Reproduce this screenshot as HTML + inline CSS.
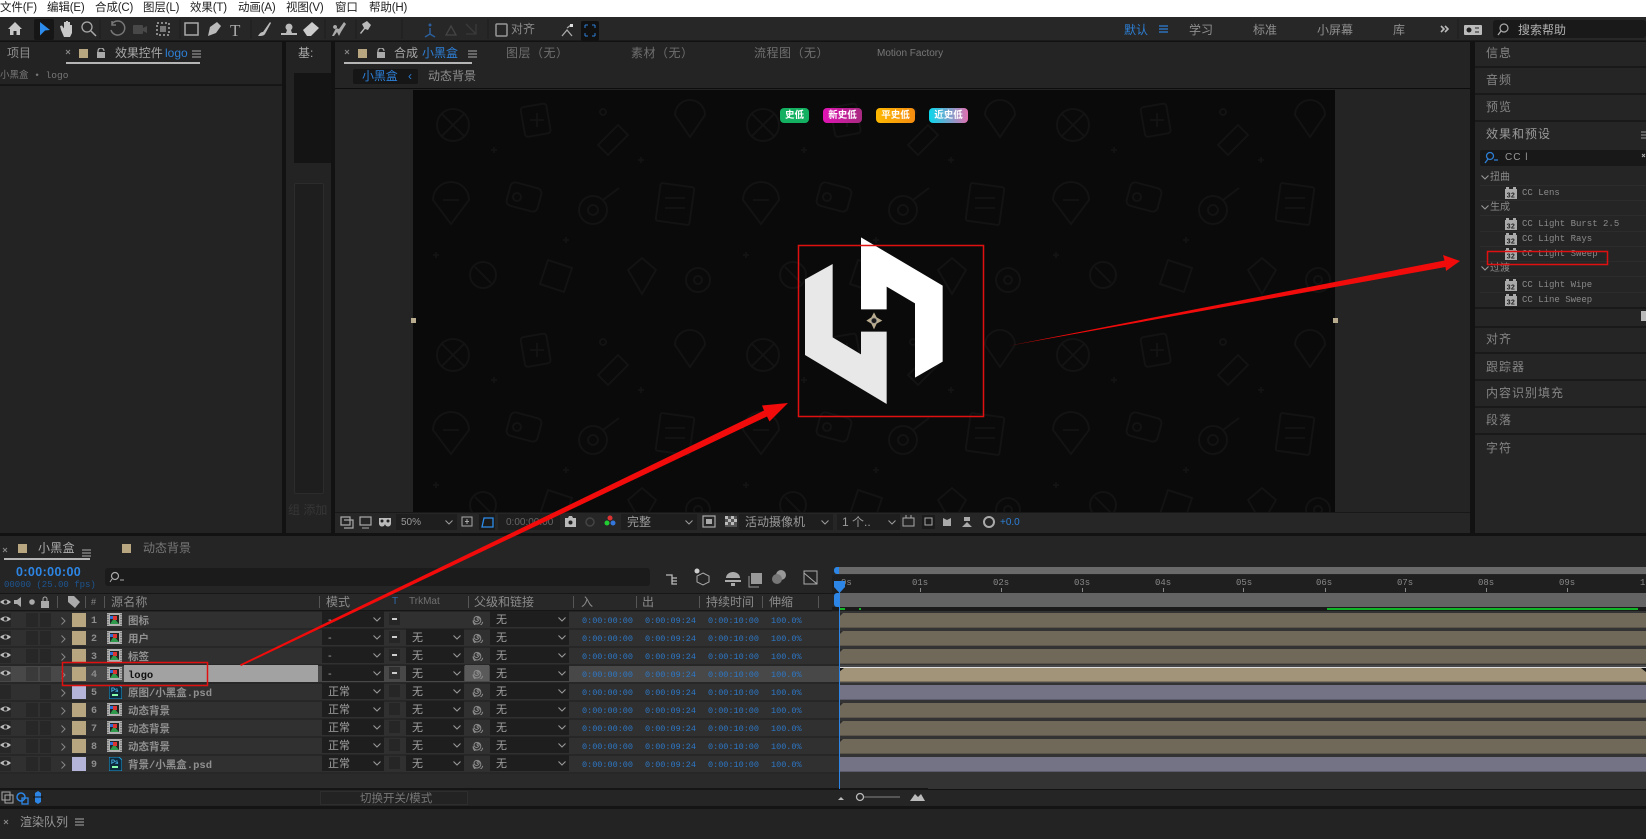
<!DOCTYPE html>
<html lang="zh"><head><meta charset="utf-8"><title>After Effects</title>
<style>
html,body{margin:0;padding:0;background:#111;}
#p{position:relative;width:1646px;height:839px;overflow:hidden;background:#121212;font-family:"Liberation Sans","Noto Sans CJK SC",sans-serif;color:#8f8f8f;font-size:12px;}
#p div,#p span{position:absolute;display:block;box-sizing:border-box;}
.t{white-space:nowrap;line-height:14px;height:14px;}
.mn{color:#222;font-size:11.5px;letter-spacing:-.15px;top:1px;}
.b{color:#2d7fd6;}
.m{font-family:"Liberation Mono","Noto Sans CJK SC",monospace;}
.hl{height:2px;background:#191919;left:1475px;width:171px;}
.r{left:0;width:839px;height:18px;background:#303030;border-bottom:2px solid #272727;}
.r .box{top:1px;height:14px;background:#272727;}
.x1{left:0;width:11px;}.x2{left:26px;width:12px;}.x3{left:40px;width:11px;}
.sw{left:72px;top:1px;width:14px;height:14px;background:#b8a680;}
.lv{background:#b4b4d8;}
.n{left:91px;top:3px;width:8px;font:bold 10px/14px "Liberation Mono",monospace;color:#8d8d8d;}
.na{left:128px;top:3px;font:bold 10.5px/14px "Liberation Mono","Noto Sans CJK SC",monospace;color:#909090;white-space:nowrap;}
.sel{top:-1px;height:16px;background:#1e1e1e;color:#a0a0a0;font-size:11px;line-height:19px;overflow:hidden;}
.s1{left:322px;width:62px;padding-left:6px;}
.tb{left:389px;top:1px;width:11px;height:12px;background:#262626;}
.dash{left:392px;top:6px;width:5px;height:2px;background:#ccc;}
.s2{left:406px;width:58px;padding-left:6px;}
.s3{left:490px;width:79px;padding-left:6px;}
.tc{top:2px;font:8.5px/14px "Liberation Mono",monospace;color:#2d78c8;white-space:nowrap;}
.c1{left:582px;}.c2{left:645px;}.c3{left:708px;}.c4{left:771px;}
.bar{left:839px;width:807px;height:15px;background:#70695a;border-bottom:1px solid #5a5548;}
.bl{background:#737385;border-bottom-color:#5b5b6b;}
.rt{top:578px;font:9px/10px "Liberation Mono",monospace;color:#888;white-space:nowrap;}
.tk{top:588px;width:1px;height:4px;background:#888;}
.h{top:595px;font-size:12px;line-height:14px;color:#8a8a8a;white-space:nowrap;}
.sep{top:596px;width:1px;height:12px;background:#555;}
.pi{font:9px/12px "Liberation Mono","Noto Sans CJK SC",monospace;color:#8a8a8a;white-space:nowrap;left:1522px;}
.cat{font-size:10px;line-height:12px;color:#8a8a8a;left:1490px;white-space:nowrap;}
.rp{left:1486px;letter-spacing:1px;color:#858585;}
.line{left:1480px;width:166px;height:1px;background:#2c2c2c;}
.bd{top:108px;height:15px;border-radius:4px;color:#fff;font:bold 9.5px/15px "Liberation Sans","Noto Sans CJK SC",sans-serif;text-align:center;}
</style></head><body><div id="p">

<!-- menu -->
<div style="left:0;top:0;width:1646px;height:17px;background:#fff;"></div>
<span class="t mn" style="left:0;">文件(F)</span>
<span class="t mn" style="left:47px;">编辑(E)</span>
<span class="t mn" style="left:95px;">合成(C)</span>
<span class="t mn" style="left:143px;">图层(L)</span>
<span class="t mn" style="left:190px;">效果(T)</span>
<span class="t mn" style="left:238px;">动画(A)</span>
<span class="t mn" style="left:286px;">视图(V)</span>
<span class="t mn" style="left:335px;">窗口</span>
<span class="t mn" style="left:369px;">帮助(H)</span>

<!-- toolbar -->
<div style="left:0;top:17px;width:1646px;height:24px;background:#272727;border-bottom:1px solid #1a1a1a;"></div>
<span class="t" style="left:511px;top:22px;color:#8a8a8a;">对齐</span>
<span class="t b" style="left:1124px;top:23px;">默认</span>
<span class="t" style="left:1189px;top:23px;">学习</span>
<span class="t" style="left:1253px;top:23px;">标准</span>
<span class="t" style="left:1317px;top:23px;">小屏幕</span>
<span class="t" style="left:1393px;top:23px;">库</span>
<div style="left:1493px;top:20px;width:153px;height:18px;background:#191919;border-radius:3px;"></div>
<span class="t" style="left:1518px;top:23px;color:#b0b0b0;">搜索帮助</span>

<!-- left panel -->
<div style="left:0;top:42px;width:282px;height:491px;background:#232323;"></div>
<span class="t" style="left:7px;top:46px;">项目</span>
<span class="t" style="left:115px;top:46px;color:#a8a8a8;letter-spacing:-.1px;">效果控件</span>
<span class="t b" style="left:165px;top:46px;">logo</span>
<div style="left:66px;top:62px;width:134px;height:2px;background:#b5b5b5;"></div>
<span class="t m" style="left:0;top:69px;font-size:9.5px;color:#777;">小黑盒 • logo</span>
<div style="left:0;top:84px;width:282px;height:2px;background:#161616;"></div>

<!-- middle panel -->
<div style="left:286px;top:42px;width:45px;height:491px;background:#232323;"></div>
<span class="t" style="left:298px;top:46px;color:#aaa;">基:</span>
<div style="left:294px;top:73px;width:37px;height:90px;background:#141414;"></div>
<div style="left:294px;top:183px;width:30px;height:311px;background:#1e1e1e;border:1px solid #2c2c2c;border-radius:2px;"></div>
<span class="t" style="left:288px;top:503px;color:#363636;">组 添加</span>

<!-- comp panel -->
<div style="left:335px;top:42px;width:1135px;height:491px;background:#242424;"></div>
<span class="t" style="left:394px;top:46px;color:#a8a8a8;">合成</span>
<span class="t b" style="left:422px;top:46px;">小黑盒</span>
<div style="left:344px;top:62px;width:128px;height:2px;background:#b5b5b5;"></div>
<span class="t" style="left:506px;top:46px;letter-spacing:.5px;color:#6f6f6f;">图层（无）</span>
<span class="t" style="left:631px;top:46px;letter-spacing:.5px;color:#6f6f6f;">素材（无）</span>
<span class="t" style="left:754px;top:46px;letter-spacing:.5px;color:#6f6f6f;">流程图（无）</span>
<span class="t" style="left:877px;top:47px;font-size:10px;color:#777;">Motion Factory</span>
<div style="left:353px;top:69px;width:65px;height:15px;background:#161616;border-radius:2px;"></div>
<span class="t b" style="left:362px;top:69px;letter-spacing:-.1px;">小黑盒</span>
<span class="t b" style="left:408px;top:69px;">‹</span>
<span class="t" style="left:428px;top:69px;">动态背景</span>
<div style="left:335px;top:88px;width:1135px;height:1px;background:#0d0d0d;"></div>

<!-- comp footer -->
<div style="left:335px;top:512px;width:1135px;height:21px;background:#262626;border-top:1px solid #181818;"></div>
<div style="left:396px;top:514px;width:61px;height:16px;background:#1e1e1e;"></div>
<span class="t" style="left:401px;top:516px;font-size:10px;color:#999;">50%</span>
<div style="left:479px;top:514px;width:16px;height:16px;background:#1a1a1a;"></div>
<div style="left:498px;top:514px;width:62px;height:16px;background:#1e1e1e;"></div>
<span class="t" style="left:506px;top:516px;font-size:10px;color:#666;">0:00:00:00</span>
<div style="left:621px;top:514px;width:76px;height:16px;background:#1e1e1e;"></div>
<span class="t" style="left:627px;top:515px;color:#9a9a9a;">完整</span>
<div style="left:739px;top:514px;width:94px;height:16px;background:#1e1e1e;"></div>
<span class="t" style="left:745px;top:515px;color:#9a9a9a;">活动摄像机</span>
<div style="left:837px;top:514px;width:63px;height:16px;background:#1e1e1e;"></div>
<span class="t" style="left:842px;top:515px;color:#9a9a9a;">1 个..</span>
<span class="t b" style="left:1000px;top:516px;font-size:10px;">+0.0</span>

<!-- right panel -->
<div style="left:1475px;top:42px;width:171px;height:491px;background:#252525;"></div>
<span class="t rp" style="top:46px;">信息</span><div class="hl" style="top:66px;"></div>
<span class="t rp" style="top:73px;">音频</span><div class="hl" style="top:93px;"></div>
<span class="t rp" style="top:100px;">预览</span><div class="hl" style="top:120px;"></div>
<span class="t rp" style="top:127px;left:1486px;color:#9a9a9a;">效果和预设</span>
<div style="left:1480px;top:150px;width:166px;height:16px;background:#181818;border-radius:2px;"></div>
<span class="t" style="left:1505px;top:151px;font-size:10px;letter-spacing:1px;color:#999;">CC l</span>
<span class="cat" style="top:172px;">扭曲</span><div class="line" style="top:185px;"></div>
<span class="pi" style="top:187px;">CC Lens</span><div class="line" style="top:200px;"></div>
<span class="cat" style="top:202px;">生成</span><div class="line" style="top:215px;"></div>
<span class="pi" style="top:218px;">CC Light Burst 2.5</span><div class="line" style="top:231px;"></div>
<span class="pi" style="top:233px;">CC Light Rays</span><div class="line" style="top:246px;"></div>
<span class="pi" style="top:248px;">CC Light Sweep</span><div class="line" style="top:261px;"></div>
<span class="cat" style="top:263px;">过渡</span><div class="line" style="top:276px;"></div>
<span class="pi" style="top:279px;">CC Light Wipe</span><div class="line" style="top:292px;"></div>
<span class="pi" style="top:294px;">CC Line Sweep</span>
<div class="hl" style="top:307px;"></div>
<div class="hl" style="top:326px;"></div>
<span class="t rp" style="top:332px;">对齐</span><div class="hl" style="top:352px;"></div>
<span class="t rp" style="top:360px;">跟踪器</span><div class="hl" style="top:379px;"></div>
<span class="t rp" style="top:386px;">内容识别填充</span><div class="hl" style="top:406px;"></div>
<span class="t rp" style="top:413px;">段落</span><div class="hl" style="top:433px;"></div>
<span class="t rp" style="top:441px;">字符</span>

<div style="left:413px;top:90px;width:922px;height:422px;background:#0a0a0a;"></div>

<!-- timeline -->
<div style="left:0;top:536px;width:1646px;height:253px;background:#252525;"></div>
<span class="t" style="left:38px;top:541px;color:#aaa;letter-spacing:.3px;">小黑盒</span>
<span class="t" style="left:143px;top:541px;color:#777;">动态背景</span>
<div style="left:4px;top:558px;width:86px;height:2px;background:#b5b5b5;"></div>
<span class="t" style="left:16px;top:565px;font:bold 12.5px/14px 'Liberation Sans',sans-serif;color:#2d86e6;letter-spacing:.4px;">0:00:00:00</span>
<span class="t m" style="left:4px;top:578px;font-size:9px;color:#1e5590;">00000 (25.00 fps)</span>
<div style="left:105px;top:568px;width:545px;height:18px;background:#1b1b1b;border-radius:3px;"></div>
<div style="left:0;top:593px;width:839px;height:18px;background:#282828;border-top:1px solid #161616;border-bottom:1px solid #161616;"></div>
<span class="h" style="left:111px;letter-spacing:.2px;">源名称</span>
<span class="h" style="left:326px;">模式</span>
<span class="h" style="left:392px;font-size:10px;color:#2f6aa8;">T</span>
<span class="h" style="left:409px;font-size:10px;color:#707070;">TrkMat</span>
<span class="h" style="left:474px;">父级和链接</span>
<span class="h" style="left:581px;">入</span>
<span class="h" style="left:642px;">出</span>
<span class="h" style="left:706px;">持续时间</span>
<span class="h" style="left:769px;">伸缩</span>
<span class="h" style="left:91px;font-size:9px;">#</span>
<div class="sep" style="left:57px;"></div><div class="sep" style="left:85px;"></div><div class="sep" style="left:104px;"></div><div class="sep" style="left:319px;"></div><div class="sep" style="left:468px;"></div><div class="sep" style="left:573px;"></div><div class="sep" style="left:636px;"></div><div class="sep" style="left:699px;"></div><div class="sep" style="left:762px;"></div><div class="sep" style="left:818px;"></div>

<!-- timeline right -->
<div style="left:839px;top:567px;width:807px;height:7px;background:#6a6a6a;"></div>
<div style="left:834px;top:567px;width:5px;height:7px;background:#2d86e6;border-radius:3px 0 0 3px;"></div>
<div style="left:832px;top:575px;width:814px;height:18px;background:#1f1f1f;"></div>
<span class="rt" style="left:841px;">0s</span>
<span class="rt" style="left:912px;">01s</span><span class="rt" style="left:993px;">02s</span><span class="rt" style="left:1074px;">03s</span><span class="rt" style="left:1155px;">04s</span><span class="rt" style="left:1236px;">05s</span><span class="rt" style="left:1316px;">06s</span><span class="rt" style="left:1397px;">07s</span><span class="rt" style="left:1478px;">08s</span><span class="rt" style="left:1559px;">09s</span><span class="rt" style="left:1640px;">10</span>
<div class="tk" style="left:920px;"></div><div class="tk" style="left:1001px;"></div><div class="tk" style="left:1082px;"></div><div class="tk" style="left:1163px;"></div><div class="tk" style="left:1243px;"></div><div class="tk" style="left:1325px;"></div><div class="tk" style="left:1405px;"></div><div class="tk" style="left:1486px;"></div><div class="tk" style="left:1567px;"></div>
<div style="left:839px;top:593px;width:807px;height:14px;background:#636363;"></div>
<div style="left:834px;top:593px;width:5px;height:14px;background:#2d86e6;border-radius:3px 0 0 3px;"></div>
<div style="left:832px;top:607px;width:814px;height:4px;background:#1a1a1a;"></div>
<div style="left:839px;top:608px;width:6px;height:2px;background:#12b528;"></div>
<div style="left:859px;top:608px;width:2px;height:2px;background:#12b528;"></div>
<div style="left:1327px;top:608px;width:311px;height:2px;background:#12b528;"></div>
<div style="left:832px;top:611px;width:814px;height:178px;background:#333;"></div>
<div style="left:832px;top:611px;width:7px;height:178px;background:#2a2a2a;"></div>
<div style="left:570px;top:665px;width:1076px;height:18px;background:#484848;"></div>

<div class="bar" style="top:613px;"></div>
<div class="bar" style="top:631px;"></div>
<div class="bar" style="top:649px;"></div>
<div class="bar" style="top:667px;height:15px;background:#a29479;border-top:1px solid #ddd;border-bottom:1px solid #7a705c;"></div>
<div class="bar bl" style="top:685px;"></div>
<div class="bar" style="top:703px;"></div>
<div class="bar" style="top:721px;"></div>
<div class="bar" style="top:739px;"></div>
<div class="bar bl" style="top:757px;"></div>

<!-- rows -->
<div class="r" style="top:612px;"><div class="box x1"></div><div class="box x2"></div><div class="box x3"></div><div class="sw"></div><span class="n">1</span><span class="na">图标</span><div class="sel s1">-</div><div class="tb"></div><div class="dash"></div><div class="sel s3">无</div><span class="tc c1">0:00:00:00</span><span class="tc c2">0:00:09:24</span><span class="tc c3">0:00:10:00</span><span class="tc c4">100.0%</span></div>
<div class="r" style="top:630px;"><div class="box x1"></div><div class="box x2"></div><div class="box x3"></div><div class="sw"></div><span class="n">2</span><span class="na">用户</span><div class="sel s1">-</div><div class="tb"></div><div class="dash"></div><div class="sel s2">无</div><div class="sel s3">无</div><span class="tc c1">0:00:00:00</span><span class="tc c2">0:00:09:24</span><span class="tc c3">0:00:10:00</span><span class="tc c4">100.0%</span></div>
<div class="r" style="top:648px;"><div class="box x1"></div><div class="box x2"></div><div class="box x3"></div><div class="sw"></div><span class="n">3</span><span class="na">标签</span><div class="sel s1">-</div><div class="tb"></div><div class="dash"></div><div class="sel s2">无</div><div class="sel s3">无</div><span class="tc c1">0:00:00:00</span><span class="tc c2">0:00:09:24</span><span class="tc c3">0:00:10:00</span><span class="tc c4">100.0%</span></div>
<div class="r" style="top:666px;background:#484848;"><div class="box x1" style="background:#3a3a3a;"></div><div class="box x2" style="background:#3a3a3a;"></div><div class="box x3" style="background:#3a3a3a;"></div><div class="sw"></div><span class="n">4</span><div style="left:124px;top:-1px;width:194px;height:17px;background:#a2a2a2;"></div><span class="na" style="color:#111;">logo</span><div class="sel s1">-</div><div class="tb" style="background:#303030;"></div><div class="dash"></div><div class="sel s2">无</div><div style="left:465px;top:-1px;width:24px;height:16px;background:#5a5a5a;"></div><div class="sel s3">无</div><span class="tc c1">0:00:00:00</span><span class="tc c2">0:00:09:24</span><span class="tc c3">0:00:10:00</span><span class="tc c4">100.0%</span></div>
<div class="r" style="top:684px;"><div class="box x1"></div><div class="box x3"></div><div class="sw lv"></div><span class="n">5</span><span class="na">原图/小黑盒.psd</span><div class="sel s1">正常</div><div class="tb"></div><div class="sel s2">无</div><div class="sel s3">无</div><span class="tc c1">0:00:00:00</span><span class="tc c2">0:00:09:24</span><span class="tc c3">0:00:10:00</span><span class="tc c4">100.0%</span></div>
<div class="r" style="top:702px;"><div class="box x1"></div><div class="box x2"></div><div class="box x3"></div><div class="sw"></div><span class="n">6</span><span class="na">动态背景</span><div class="sel s1">正常</div><div class="tb"></div><div class="sel s2">无</div><div class="sel s3">无</div><span class="tc c1">0:00:00:00</span><span class="tc c2">0:00:09:24</span><span class="tc c3">0:00:10:00</span><span class="tc c4">100.0%</span></div>
<div class="r" style="top:720px;"><div class="box x1"></div><div class="box x2"></div><div class="box x3"></div><div class="sw"></div><span class="n">7</span><span class="na">动态背景</span><div class="sel s1">正常</div><div class="tb"></div><div class="sel s2">无</div><div class="sel s3">无</div><span class="tc c1">0:00:00:00</span><span class="tc c2">0:00:09:24</span><span class="tc c3">0:00:10:00</span><span class="tc c4">100.0%</span></div>
<div class="r" style="top:738px;"><div class="box x1"></div><div class="box x2"></div><div class="box x3"></div><div class="sw"></div><span class="n">8</span><span class="na">动态背景</span><div class="sel s1">正常</div><div class="tb"></div><div class="sel s2">无</div><div class="sel s3">无</div><span class="tc c1">0:00:00:00</span><span class="tc c2">0:00:09:24</span><span class="tc c3">0:00:10:00</span><span class="tc c4">100.0%</span></div>
<div class="r" style="top:756px;"><div class="box x1"></div><div class="box x2"></div><div class="box x3"></div><div class="sw lv"></div><span class="n">9</span><span class="na">背景/小黑盒.psd</span><div class="sel s1">正常</div><div class="tb"></div><div class="sel s2">无</div><div class="sel s3">无</div><span class="tc c1">0:00:00:00</span><span class="tc c2">0:00:09:24</span><span class="tc c3">0:00:10:00</span><span class="tc c4">100.0%</span></div>
<div style="left:0;top:774px;width:832px;height:15px;background:#2a2a2a;"></div>

<!-- timeline footer -->
<div style="left:0;top:788px;width:928px;height:2px;background:#151515;"></div>
<div style="left:0;top:790px;width:1646px;height:16px;background:#252525;"></div>
<div style="left:320px;top:791px;width:148px;height:14px;background:#232323;border:1px solid #2e2e2e;"></div>
<span class="t" style="left:360px;top:792px;font-size:11.5px;color:#777;">切换开关/模式</span>
<div style="left:0;top:806px;width:1646px;height:3px;background:#141414;"></div>
<div style="left:0;top:809px;width:1646px;height:30px;background:#232323;"></div>
<span class="t" style="left:20px;top:815px;color:#999;">渲染队列</span>

<svg width="1646" height="839" viewBox="0 0 1646 839" style="position:absolute;left:0;top:0;" xmlns="http://www.w3.org/2000/svg">
<defs>
<pattern id="dood" width="310" height="230" patternUnits="userSpaceOnUse" x="413" y="90">
<g fill="none" stroke="#131313" stroke-width="1.800">
<circle cx="40" cy="35" r="16"/><path d="M29 24l22 22M51 24L29 46"/>
<rect x="110" y="15" width="26" height="30" rx="3" transform="rotate(-10 124 32)"/><path d="M117 30h14M124 23v14"/>
<path d="M185 55l20-20 10 10-20 20z"/><circle cx="190" cy="22" r="3"/>
<path d="M262 25a15 15 0 0 1 30 0l-15 22z"/>
<path d="M20 110a18 18 0 0 1 36 0l-18 24z"/><path d="M30 110h16"/>
<rect x="95" y="95" width="32" height="24" rx="5" transform="rotate(15 111 107)"/><circle cx="104" cy="107" r="4"/>
<circle cx="180" cy="120" r="14"/><path d="M190 110l16-12"/><circle cx="180" cy="120" r="5"/>
<rect x="245" y="95" width="34" height="38" rx="2" transform="rotate(8 262 114)"/><path d="M252 108h20M252 118h20"/>
<circle cx="70" cy="185" r="13"/><path d="M62 177l16 16"/>
<path d="M135 170l24 8-8 24-24-8z"/>
<path d="M215 180l14-12 14 12-14 24z"/>
<circle cx="285" cy="190" r="12"/><circle cx="285" cy="190" r="4"/>
<path d="M78 60h6M81 57v6M150 150h6M153 147v6M225 70h6M228 67v6M20 165h6M23 162v6"/>
</g></pattern>
<symbol id="eye" viewBox="0 0 11 8" width="11" height="8"><path d="M0 4Q5.500-1 11 4 5.500 9 0 4Z" fill="#bbb"/><circle cx="5.500" cy="4" r="1.800" fill="#222"/></symbol>
<symbol id="film" viewBox="0 0 15 13" width="15" height="13"><rect width="15" height="13" fill="#b0b0b0"/><rect x="3" y="2" width="9" height="9" fill="#222"/><path d="M3 11l4-6 5 6z" fill="#2f9a4c"/><rect x="6" y="3" width="4" height="4" fill="#d33"/><rect x="3" y="3" width="3" height="3" fill="#2d6ed6"/><path d="M1 1v11M14 1v11" stroke="#444" stroke-dasharray="1 1.500"/></symbol>
<symbol id="psd" viewBox="0 0 13 14" width="13" height="14"><path d="M0 0h10l3 3v11H0z" fill="#0d2a3c" stroke="#1a9ed8"/><text x="2" y="7" font-size="6" font-weight="bold" font-family="Liberation Sans" fill="#49b6ea">Ps</text><rect x="3" y="9" width="6" height="2" fill="#8fa"/></symbol>
<symbol id="sp" viewBox="0 0 12 12" width="12" height="12"><path d="M6 6.500a1 1 0 1 1 1-1 2.500 2.500 0 1 1-2.800-2 3.800 3.800 0 1 1-3 3.800 4.800 4.800 0 0 0 9.500 1.500" fill="none" stroke="#8c8c8c" stroke-width="1"/></symbol>
<symbol id="cd" viewBox="0 0 8 5" width="8" height="5"><path d="M.5.500L4 4 7.500.500" fill="none" stroke="#999" stroke-width="1.100"/></symbol>
<symbol id="cr" viewBox="0 0 5 8" width="5" height="8"><path d="M.5.500L4 4 .5 7.500" fill="none" stroke="#888" stroke-width="1"/></symbol>
<symbol id="fx" viewBox="0 0 12 12" width="12" height="12"><path d="M0 2h1V0h3v2h4V0h3v2h1v10H0z" fill="#aaa"/><text x="1.500" y="10.500" font-size="7" font-weight="bold" font-family="Liberation Mono" fill="#222">32</text></symbol>
<symbol id="ham" viewBox="0 0 9 8" width="9" height="8"><path d="M0 1h9M0 4h9M0 7h9" stroke="#aaa" stroke-width="1"/></symbol>
<symbol id="lock" viewBox="0 0 8 10" width="8" height="10"><path d="M1 4V3a3 3 0 0 1 6 0" fill="none" stroke="#aaa" stroke-width="1.300"/><rect y="4" width="8" height="6" fill="#aaa"/></symbol>
</defs>

<rect x="413" y="90" width="922" height="422" fill="url(#dood)"/>

<!-- toolbar icons -->
<path d="M8 29l7-7 7 7h-2v6h-3.500v-4h-3v4H10v-6z" fill="#c8c8c8"/>
<rect x="34" y="19" width="20" height="21" rx="2" fill="#161616"/><path d="M40 22l10 8-5 .5-5 5z" fill="#2d8ceb"/>
<path d="M61 30l-1-4 2-.5 2 3V22h2v5-6h2v6-5h2v6-3h2v8l-2 4h-6z" fill="#c8c8c8"/>
<circle cx="87" cy="27" r="5" fill="none" stroke="#aaa" stroke-width="1.300"/><path d="M91 31l5 5" stroke="#aaa" stroke-width="1.500"/>
<path d="M112 24a7 7 0 1 1-1 6M112 21v4h4" fill="none" stroke="#777" stroke-width="1.500"/>
<rect x="133" y="25" width="10" height="9" rx="1" fill="#484848"/><path d="M143 28l4-2v7l-4-2z" fill="#484848"/>
<path d="M157 23h12v12h-12z" fill="none" stroke="#aaa" stroke-dasharray="2 2" stroke-width="1.500"/><rect x="160" y="26" width="6" height="6" fill="#777"/>
<rect x="185" y="23" width="13" height="12" fill="none" stroke="#aaa" stroke-width="1.500"/>
<path d="M208 36l2-9 7-5 4 4-5 7z" fill="#bbb"/>
<text x="230" y="36" font-family="Liberation Serif" font-size="17" fill="#aaa">T</text>
<path d="M258 36c2-3 3-4 5-4l7-10 1 1-6 11c-1 2-4 2-7 2z" fill="#bbb"/>
<path d="M281 35h16v-2h-5l-1-3a3.500 3.500 0 1 0-4 0l-1 3h-5z" fill="#bbb"/>
<path d="M303 30l9-8 7 6-8 8h-4z" fill="#ccc"/>
<path d="M332 36l4-8 3 1 5-7 2 2-5 8-2 4-2-4-3 4zM335 25a2 2 0 1 0 .1 0" fill="#aaa"/>
<path d="M362 24l5-3 4 4-3 5-3-1-4 5-1-1 4-5z" fill="#bbb"/>
<path d="M430 28v6l-5 3M430 34l5 3" stroke="#2a5f9c" stroke-width="1.500" fill="none"/><circle cx="430" cy="25" r="1.500" fill="#2a5f9c"/>
<path d="M451 26l-5 9h10z" fill="none" stroke="#444" stroke-width="1.300"/>
<path d="M466 24l10 10M476 24v10h-10" fill="none" stroke="#3a3a3a" stroke-width="1.300"/>
<rect x="496" y="24" width="11" height="12" rx="1" fill="none" stroke="#999" stroke-width="1.500"/>
<path d="M562 36l5-6 5 6M567 28l4-3" stroke="#aaa" fill="none" stroke-width="1.300"/><rect x="570" y="24" width="3" height="3" fill="#ddd"/>
<rect x="581" y="21" width="18" height="20" rx="2" fill="#111"/><path d="M585 25h3M592 25h3M585 36h3M592 36h3M585 25v3M595 25v3M585 33v3M595 33v3" stroke="#2d7fd6" fill="none"/>
<path d="M1159 26h9M1159 29h9M1159 32h9" stroke="#2d7fd6" stroke-width="1.300"/>
<path d="M1441 26l3 3-3 3M1445 26l3 3-3 3" fill="none" stroke="#bbb" stroke-width="1.600"/>
<rect x="1464" y="25" width="18" height="10" rx="1" fill="#bbb"/><circle cx="1469" cy="30" r="2.500" fill="#222"/><path d="M1475 28h4M1475 32h4" stroke="#222"/>
<circle cx="1504" cy="28" r="4" fill="none" stroke="#aaa" stroke-width="1.200"/><path d="M1501 31l-3 4" stroke="#aaa" stroke-width="1.300"/>
<path d="M100 19v20M180 19v20M251 19v20M325 19v20M356 19v20M402 19v20M488 19v20M1458 19v20" stroke="#1e1e1e"/>

<!-- panel tab icons -->
<path d="M66 50l4 4M70 50l-4 4M345 50l4 4M349 50l-4 4M3 548l4 4M7 548l-4 4M4 820l4 4M8 820l-4 4" stroke="#888" fill="none"/>
<rect x="79" y="49" width="9" height="9" fill="#b8a680"/><rect x="358" y="49" width="9" height="9" fill="#b8a680"/>
<use href="#lock" x="97" y="48"/><use href="#lock" x="377" y="48"/>
<use href="#ham" x="192" y="50"/><use href="#ham" x="468" y="50"/><use href="#ham" x="82" y="549"/><use href="#ham" x="75" y="818"/>
<path d="M1641 132h5M1641 135h5M1641 138h5" stroke="#999"/>
<rect x="18" y="544" width="9" height="9" fill="#b8a680"/><rect x="122" y="544" width="9" height="9" fill="#b8a680"/>

<!-- logo -->
<g transform="translate(760 220) scale(.33333)">
<path d="M135 178L218 132V352L303 403V335H380V552L135 405Z" fill="#e8e8e8"/>
<path d="M303 52L548 197V425L465 473V250L380 200V268H303Z" fill="#fff"/>
<path d="M342 277l8 15 17 10-17 9-8 17-8-17-15-9 15-10z" fill="#b8ab8e"/><circle cx="342" cy="302" r="8" fill="#1a1a1a" stroke="#888" stroke-width="2"/>
</g>
<rect x="411" y="318" width="5" height="5" fill="#b8ab8e"/><rect x="1333" y="318" width="5" height="5" fill="#b8ab8e"/>

<!-- comp footer icons -->
<path d="M341 517h9v8h-9zM344 520h9v8h-9" fill="none" stroke="#aaa" stroke-width="1.200"/>
<rect x="360" y="517" width="11" height="8" fill="none" stroke="#aaa" stroke-width="1.200"/><path d="M362 528h7" stroke="#aaa"/>
<path d="M379 518h12v5a3 3 0 0 1-6 1 3 3 0 0 1-6-1z" fill="#bbb"/><circle cx="382" cy="521" r="1.500" fill="#222"/><circle cx="388" cy="521" r="1.500" fill="#222"/>
<rect x="462" y="517" width="10" height="9" fill="none" stroke="#aaa"/><path d="M467 519v5M465 521.500h4" stroke="#aaa"/>
<path d="M482 527l2-9h9v9z" fill="none" stroke="#2d8ceb" stroke-width="1.300"/>
<path d="M565 518h3l1-2h3l1 2h3v9h-11z" fill="#bbb"/><circle cx="570.500" cy="522.500" r="2" fill="#222"/>
<circle cx="590" cy="522" r="4" fill="none" stroke="#444" stroke-width="1.500"/>
<circle cx="610" cy="518" r="2.500" fill="#d33"/><circle cx="607" cy="523" r="2.500" fill="#2c3"/><circle cx="613" cy="523" r="2.500" fill="#37d"/>
<rect x="703" y="516" width="12" height="11" fill="none" stroke="#aaa" stroke-width="1.200"/><rect x="706" y="519" width="6" height="5" fill="#aaa"/>
<rect x="725" y="516" width="12" height="11" fill="#555"/><path d="M725 516h3v3h-3zM731 516h3v3h-3zM728 519h3v3h-3zM734 519h3v3h-3zM725 522h3v3h-3zM731 522h3v3h-3z" fill="#bbb"/>
<path d="M903 518h11v8h-11zM906 515v3M911 515v3" fill="none" stroke="#aaa"/>
<rect x="922" y="515" width="13" height="14" fill="#1b1b1b"/><path d="M925 518h7v7h-7z" fill="none" stroke="#aaa"/>
<path d="M943 526v-8l4 2 4-2v8z" fill="#aaa"/>
<path d="M962 527l5-5 5 5zM964 517h6v4h-6z" fill="#aaa"/>
<circle cx="989" cy="522" r="5" fill="none" stroke="#aaa" stroke-width="2"/>
<use href="#cd" x="445" y="520"/><use href="#cd" x="685" y="520"/><use href="#cd" x="821" y="520"/><use href="#cd" x="888" y="520"/>

<!-- effects list icons -->
<circle cx="1490" cy="156" r="3.500" fill="none" stroke="#2d7fd6" stroke-width="1.300"/><path d="M1488 159l-3 4M1494 160h4" stroke="#2d7fd6" stroke-width="1.300"/>
<path d="M1642 154l3 3m0-3l-3 3" stroke="#aaa"/>
<use href="#cd" x="1481" y="175"/><use href="#cd" x="1481" y="205"/><use href="#cd" x="1481" y="266"/>
<use href="#fx" x="1505" y="187"/><use href="#fx" x="1505" y="218"/><use href="#fx" x="1505" y="233"/><use href="#fx" x="1505" y="248"/><use href="#fx" x="1505" y="279"/><use href="#fx" x="1505" y="294"/>
<path d="M1641 311h5v10h-5z" fill="#bbb"/>

<!-- timeline tools -->
<circle cx="115" cy="576" r="3.500" fill="none" stroke="#aaa" stroke-width="1.200"/><path d="M112 579l-2 3M120 580h4" stroke="#aaa"/>
<path d="M666 575h6v6h5M672 578h5M672 581v3h5" fill="none" stroke="#bbb" stroke-width="1.300"/>
<path d="M703 573l6 3v6l-6 3-6-3v-6z" fill="none" stroke="#aaa"/><circle cx="697" cy="571" r="2.500" fill="#ccc"/>
<path d="M726 578a7 6 0 0 1 14 0zM725 580h16v2h-16zM731 583h4v3h-4z" fill="#aaa"/>
<path d="M751 573h11v11h-11z" fill="#999"/><path d="M749 576v11h10" fill="none" stroke="#999"/>
<circle cx="781" cy="575" r="5" fill="#999"/><circle cx="777" cy="579" r="5" fill="#777"/>
<rect x="804" y="571" width="13" height="13" fill="none" stroke="#aaa"/><path d="M804 573l13 11" stroke="#aaa"/>

<!-- header icons -->
<use href="#eye" x="0" y="598"/>
<path d="M14 600h3l4-3v10l-4-3h-3z" fill="#aaa"/><circle cx="32" cy="602" r="2.800" fill="#aaa"/><rect x="41" y="601" width="8" height="7" fill="#aaa"/><path d="M43 601v-2a2 2 0 0 1 4 0v2" stroke="#aaa" fill="none"/>
<path d="M68 596h6l6 6-5 6-7-6z" fill="#aaa"/>

<!-- row icons -->
<use href="#eye" x="0" y="615"/><use href="#eye" x="0" y="633"/><use href="#eye" x="0" y="651"/><use href="#eye" x="0" y="669"/><use href="#eye" x="0" y="705"/><use href="#eye" x="0" y="723"/><use href="#eye" x="0" y="741"/><use href="#eye" x="0" y="759"/>
<use href="#cr" x="61" y="617"/><use href="#cr" x="61" y="635"/><use href="#cr" x="61" y="653"/><use href="#cr" x="61" y="671"/><use href="#cr" x="61" y="689"/><use href="#cr" x="61" y="707"/><use href="#cr" x="61" y="725"/><use href="#cr" x="61" y="743"/><use href="#cr" x="61" y="761"/>
<use href="#film" x="107" y="613"/><use href="#film" x="107" y="631"/><use href="#film" x="107" y="649"/><use href="#film" x="107" y="667"/><use href="#psd" x="109" y="685"/><use href="#film" x="107" y="703"/><use href="#film" x="107" y="721"/><use href="#film" x="107" y="739"/><use href="#psd" x="109" y="757"/>
<use href="#cd" x="373" y="617"/><use href="#cd" x="373" y="635"/><use href="#cd" x="373" y="653"/><use href="#cd" x="373" y="671"/><use href="#cd" x="373" y="689"/><use href="#cd" x="373" y="707"/><use href="#cd" x="373" y="725"/><use href="#cd" x="373" y="743"/><use href="#cd" x="373" y="761"/>
<use href="#cd" x="453" y="635"/><use href="#cd" x="453" y="653"/><use href="#cd" x="453" y="671"/><use href="#cd" x="453" y="689"/><use href="#cd" x="453" y="707"/><use href="#cd" x="453" y="725"/><use href="#cd" x="453" y="743"/><use href="#cd" x="453" y="761"/>
<use href="#cd" x="558" y="617"/><use href="#cd" x="558" y="635"/><use href="#cd" x="558" y="653"/><use href="#cd" x="558" y="671"/><use href="#cd" x="558" y="689"/><use href="#cd" x="558" y="707"/><use href="#cd" x="558" y="725"/><use href="#cd" x="558" y="743"/><use href="#cd" x="558" y="761"/>
<use href="#sp" x="472" y="613"/><use href="#sp" x="472" y="631"/><use href="#sp" x="472" y="649"/><use href="#sp" x="472" y="667"/><use href="#sp" x="472" y="685"/><use href="#sp" x="472" y="703"/><use href="#sp" x="472" y="721"/><use href="#sp" x="472" y="739"/><use href="#sp" x="472" y="757"/>

<!-- bar corners -->
<path d="M839 613h4l-4 4zM839 631h4l-4 4zM839 649h4l-4 4zM839 703h4l-4 4zM839 721h4l-4 4zM839 739h4l-4 4z" fill="#2a2a2a"/>
<path d="M839 668h5l-5 4zM1646 668h-5l5 4z" fill="#111"/>

<!-- playhead -->
<path d="M834 581h11v6l-5.500 6-5.500-6z" fill="#2d86e6"/>
<rect x="839" y="592" width="1" height="197" fill="#2d86e6"/>

<!-- footer icons -->
<path d="M2 792h8v8H2zM5 795h8v8H5z" fill="none" stroke="#aaa"/>
<circle cx="21" cy="797" r="4" fill="none" stroke="#2d86e6" stroke-width="1.500"/><rect x="22" y="798" width="6" height="6" fill="none" stroke="#2d86e6" stroke-width="1.300"/>
<path d="M35 793l3-2 3 2v9l-3 2-3-2z" fill="#2d86e6"/><path d="M33 797h10" stroke="#111"/>
<path d="M838 800l3-3 3 3z" fill="#bbb"/><circle cx="860" cy="797" r="3.500" fill="none" stroke="#bbb" stroke-width="1.300"/><path d="M864 797h36" stroke="#555" stroke-width="2"/><path d="M910 801l5-7 3 3 3-3 4 7z" fill="#bbb"/>

<!-- red annotations -->
<path d="M240 664.500L764 410.500 762 405.500 788 403 769.500 421.500 767 416.500 241 666Z" fill="#f20b0b"/>
<path d="M1008 346L1444.500 260.500 1443 255 1460 261 1446 271 1445.500 267Z" fill="#f20b0b"/>
<rect x="798.500" y="245.500" width="185" height="171" fill="none" stroke="#e01010" stroke-width="1.500"/>
<rect x="1487.500" y="251.500" width="120" height="13" fill="none" stroke="#e01010" stroke-width="1.500"/>
<rect x="62.500" y="662.500" width="145" height="23" fill="none" stroke="#e01010" stroke-width="1.500"/>
</svg>

<!-- badges -->
<div class="bd" style="left:780px;width:29px;background:#12b060;">史低</div>
<div class="bd" style="left:823px;width:39px;background:linear-gradient(90deg,#e014b4,#a82a80);">新史低</div>
<div class="bd" style="left:876px;width:39px;background:linear-gradient(90deg,#fdb800,#f58c10);">平史低</div>
<div class="bd" style="left:929px;width:39px;background:linear-gradient(90deg,#08d8ec,#e070b0);">近史低</div>
</div></body></html>
